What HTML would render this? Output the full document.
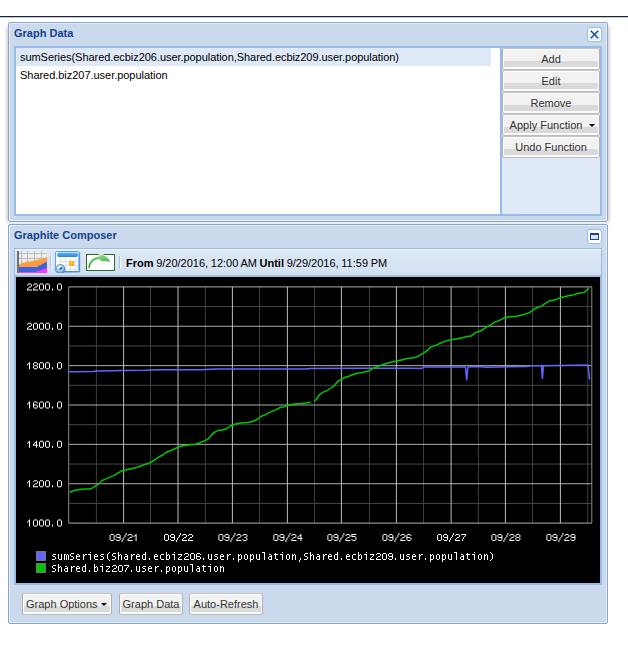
<!DOCTYPE html>
<html><head><meta charset="utf-8">
<style>
html,body{margin:0;padding:0;background:#fff;width:628px;height:662px;overflow:hidden;position:relative;font-family:"Liberation Sans",sans-serif;font-size:11px;}
.abs{position:absolute;}
.topline{left:0;top:16px;width:628px;height:1px;background:#232323;}
.topline2{left:0;top:17px;width:628px;height:1px;background:#b4cdee;}
.shadow{left:4px;top:26px;width:608px;height:200px;border-radius:4px;box-shadow:0 0 4px 1px rgba(0,0,0,0.18);background:rgba(0,0,0,0.06);}
.win{left:8px;width:598px;background:#cad9ec;border:1px solid #8ba6cb;border-radius:2px;box-shadow:inset 0 0 0 1px #e4ebf4;}
.title{left:5px;font-weight:bold;color:#15428b;font-size:11px;line-height:13px;white-space:nowrap;}
.tool{width:13px;height:13px;border:1px solid #9cbde9;border-radius:3px;background:#fff;}
.body{border:2px solid #99bbe8;}
.btn{position:absolute;box-sizing:border-box;border:1px solid #aeaeae;border-top-color:#c4c4c4;border-bottom-color:#bcbcbc;border-radius:3px;box-shadow:inset 1px 0 0 #fff,inset -1px 0 0 #fff;
 background:linear-gradient(to bottom,#fff 0,#fff 1px,#f2f2f2 1px,#f2f2f2 12px,#dadada 12px,#dadada 18px,#f7f7f7 18px,#fff 20px);
 color:#333;font-size:11px;line-height:13px;text-align:center;white-space:nowrap;}
.btn span{position:absolute;left:0;right:0;}
.arrow{position:absolute;width:0;height:0;border-left:3px solid transparent;border-right:3px solid transparent;border-top:3px solid #000;}
.row{position:absolute;left:0;height:18px;line-height:18px;color:#000;white-space:nowrap;padding-left:4px;font-size:11px;}
.sep{position:absolute;width:1px;background:#a8c4ec;box-shadow:1px 0 0 #fff;}
svg text{font-family:"Liberation Mono",monospace;font-size:10px;fill:#fff;}
</style></head><body>
<div class="abs topline"></div>
<div class="abs topline2"></div>
<div class="abs" style="left:4px;top:24px;width:4px;height:202px;background:linear-gradient(to right,rgba(0,0,0,0),rgba(0,0,0,0.16));-webkit-mask-image:linear-gradient(to bottom,transparent 0,#000 5px,#000 calc(100% - 7px),transparent 100%);"></div>
<div class="abs" style="left:608px;top:24px;width:4px;height:202px;background:linear-gradient(to left,rgba(0,0,0,0),rgba(0,0,0,0.16));-webkit-mask-image:linear-gradient(to bottom,transparent 0,#000 5px,#000 calc(100% - 7px),transparent 100%);"></div>
<div class="abs" style="left:8px;top:222px;width:600px;height:2px;background:rgba(0,0,0,0.07);"></div>

<!-- Graph Data window -->
<div class="abs win" style="top:22px;height:198px;">
  <div class="abs title" style="top:4px;">Graph Data</div>
  <div class="abs tool" style="left:578px;top:4px;background:linear-gradient(#f4faff,#d6ebfd);box-shadow:inset 0 0 0 1px #fff;">
    <svg width="13" height="13" style="position:absolute;left:0;top:0"><path d="M2.8,2.8 L10.2,10.2 M10.2,2.8 L2.8,10.2" stroke="#1d3f8f" stroke-width="1.35"/></svg>
  </div>
  <div class="abs body" style="left:5px;top:23px;width:584px;height:166px;background:#fff;">
    <div class="row" style="top:0;width:471px;background:#dfe8f6;letter-spacing:-0.052px;">sumSeries(Shared.ecbiz206.user.population,Shared.ecbiz209.user.population)</div>
    <div class="row" style="top:18px;letter-spacing:-0.035px;">Shared.biz207.user.population</div>
    <div class="abs" style="left:484px;top:0;width:2px;height:166px;background:#99bbe8;"></div>
    <div class="abs" style="left:486px;top:0;width:98px;height:166px;background:#dfe8f6;">
      <div class="btn" style="left:0;top:0;width:98px;height:22px;"><span style="top:4px;">Add</span></div>
      <div class="btn" style="left:0;top:22px;width:98px;height:22px;"><span style="top:4px;">Edit</span></div>
      <div class="btn" style="left:0;top:44px;width:98px;height:22px;"><span style="top:4px;">Remove</span></div>
      <div class="btn" style="left:0;top:66px;width:98px;height:22px;"><span style="top:4px;left:-10px;">Apply Function</span><div class="arrow" style="left:86px;top:9px;"></div></div>
      <div class="btn" style="left:0;top:88px;width:98px;height:22px;"><span style="top:4px;">Undo Function</span></div>
    </div>
  </div>
</div>

<!-- Graphite Composer window -->
<div class="abs win" style="top:224px;height:398px;">
  <div class="abs title" style="top:4px;">Graphite Composer</div>
  <div class="abs tool" style="left:578px;top:4px;">
    <div class="abs" style="left:2px;top:3px;width:7px;height:4px;border:1px solid #1f3fa6;border-top-width:2px;background:#d5e6fa;"></div>
  </div>
  <!-- toolbar -->
  <div class="abs" style="left:5px;top:23px;width:586px;height:26px;border:1px solid #99bbe8;border-bottom-color:#a9bfd6;background:linear-gradient(#f4f8fc 0,#f4f8fc 1px,#dde8f5 1px,#d3e0f1 100%);">
    <!-- icon 1 -->
    <svg class="abs" style="left:2px;top:2px" width="30" height="22" viewBox="0 0 30 22">
      <rect x="0" y="0" width="30" height="22" fill="#ececec"/>
      <path d="M2,2.5 H30 M2,7.5 H30 M4.5,0 V22 M10.5,0 V22 M17.5,0 V22 M24.5,0 V22" stroke="#bdbdbd" stroke-width="1"/>
      <path d="M2,22 L2,13.5 L3,13 L4,12.5 L5,12.5 L6,11.8 L8,11.5 L9,11 L11,10.3 L13,10.5 L16,10 L18,9.3 L20,9 L22,8.3 L24,8.2 L26,7.3 L28,7 L29,6 L30,6 L30,22 Z" fill="#ff9b3d"/>
      <path d="M2,22 L2,16 L20,16 L22,14.5 L24,14 L25,13 L27,12.5 L28,11.5 L30,11 L30,22 Z" fill="#3f62dd"/>
      <path d="M2,22 L2,21 L19,21 L20,20 L22,20 L24,19 L26,18.5 L28,17.5 L30,17 L30,22 Z" fill="#ff38ff"/>
      <rect x="0" y="0" width="2" height="22" fill="#707070"/>
    </svg>
    <div class="sep" style="left:35px;top:7px;height:13px;"></div>
    <!-- icon 2 calendar -->
    <svg class="abs" style="left:40px;top:2px" width="26" height="22" viewBox="0 0 26 22">
      <defs><linearGradient id="hb" x1="0" y1="0" x2="0" y2="1"><stop offset="0" stop-color="#6fb8f2"/><stop offset="1" stop-color="#1f85dc"/></linearGradient>
      <radialGradient id="cl" cx="0.4" cy="0.35" r="0.7"><stop offset="0" stop-color="#f0faff"/><stop offset="0.55" stop-color="#9ccaf2"/><stop offset="1" stop-color="#3f7fd0"/></radialGradient>
      <radialGradient id="og" cx="0.45" cy="0.4" r="0.6"><stop offset="0" stop-color="#ffe80a"/><stop offset="1" stop-color="#ff9400"/></radialGradient></defs>
      <rect x="1.5" y="1.5" width="24" height="20.5" fill="#c4ccd6"/>
      <rect x="0.5" y="0.5" width="24" height="20.5" rx="1.5" fill="#fdfdfd" stroke="#55a6ee"/>
      <rect x="2" y="1.5" width="21" height="4.5" rx="2" fill="url(#hb)"/>
      <path d="M1,10.5 H24 M1,14.5 H24 M1,18.5 H24 M5.5,7 V20.5 M10.5,7 V20.5 M15.5,7 V20.5 M20.5,7 V20.5" stroke="#e4e4e4"/>
      <rect x="14" y="10" width="5" height="4.5" fill="url(#og)"/>
      <path d="M24,2 V21 M2,20.5 H24" stroke="#3f91e0" stroke-width="1"/>
      <circle cx="5.5" cy="18" r="4.5" fill="url(#cl)" stroke="#4c86cf" stroke-width="0.8"/>
      <path d="M4.5,18.5 L7,16.5" stroke="#222" stroke-width="1.2"/>
    </svg>
    <!-- icon 3 arrow -->
    <svg class="abs" style="left:71px;top:5px" width="29" height="17" viewBox="0 0 29 17">
      <defs><linearGradient id="ag" x1="0" y1="0" x2="0" y2="1"><stop offset="0" stop-color="#8fdc8f"/><stop offset="0.6" stop-color="#4fb44f"/><stop offset="1" stop-color="#2f7f2f"/></linearGradient></defs>
      <rect x="0.5" y="0.5" width="28" height="16" fill="#fff" stroke="#2e6b2e"/>
      <rect x="13" y="0" width="4.5" height="1.2" fill="#fff"/>
      <path d="M3.1,14.6 L2.4,13.2 C2.5,8 6.5,2.8 14.2,2.2 L14.4,0.2 C19,1 22.5,3.5 24.4,7.8 L14.3,6.8 L14.3,4.9 C8.5,5 4.2,8.2 3.6,14.6 Z" fill="url(#ag)"/>
    </svg>
    <div class="sep" style="left:104px;top:7px;height:13px;"></div>
    <div class="abs" style="left:111px;top:8px;line-height:13px;white-space:nowrap;color:#000;word-spacing:-0.4px;"><b>From</b> 9/20/2016, 12:00 AM <b>Until</b> 9/29/2016, 11:59 PM</div>
  </div>
  <!-- chart body border -->
  <div class="abs" style="left:5px;top:51px;width:584px;height:306px;border:2px solid #99bbe8;border-top-width:1px;"></div>
  <!-- footer buttons -->
  <div class="btn" style="left:13px;top:368px;width:90px;height:22px;"><span style="top:4px;text-align:left;padding-left:3px;">Graph Options</span><div class="arrow" style="left:78px;top:9px;"></div></div>
  <div class="btn" style="left:110px;top:368px;width:64px;height:22px;"><span style="top:4px;">Graph Data</span></div>
  <div class="btn" style="left:180px;top:368px;width:74px;height:22px;"><span style="top:4px;">Auto-Refresh</span></div>
</div>

<svg class="abs" style="left:0;top:0" width="628" height="662">
<rect x="16" y="277" width="584" height="306" fill="#000"/>
<line x1="68.7" y1="306.58" x2="591.8" y2="306.58" stroke="#484848" stroke-width="1"/>
<line x1="68.7" y1="345.95" x2="591.8" y2="345.95" stroke="#484848" stroke-width="1"/>
<line x1="68.7" y1="385.31" x2="591.8" y2="385.31" stroke="#484848" stroke-width="1"/>
<line x1="68.7" y1="424.68" x2="591.8" y2="424.68" stroke="#484848" stroke-width="1"/>
<line x1="68.7" y1="464.05" x2="591.8" y2="464.05" stroke="#484848" stroke-width="1"/>
<line x1="68.7" y1="503.41" x2="591.8" y2="503.41" stroke="#484848" stroke-width="1"/>
<line x1="96.4" y1="286.9" x2="96.4" y2="523.1" stroke="#3e3e3e" stroke-width="1"/>
<line x1="150.5" y1="286.9" x2="150.5" y2="523.1" stroke="#3e3e3e" stroke-width="1"/>
<line x1="205.3" y1="286.9" x2="205.3" y2="523.1" stroke="#3e3e3e" stroke-width="1"/>
<line x1="259.5" y1="286.9" x2="259.5" y2="523.1" stroke="#3e3e3e" stroke-width="1"/>
<line x1="314.5" y1="286.9" x2="314.5" y2="523.1" stroke="#3e3e3e" stroke-width="1"/>
<line x1="369.4" y1="286.9" x2="369.4" y2="523.1" stroke="#3e3e3e" stroke-width="1"/>
<line x1="423.5" y1="286.9" x2="423.5" y2="523.1" stroke="#3e3e3e" stroke-width="1"/>
<line x1="478.4" y1="286.9" x2="478.4" y2="523.1" stroke="#3e3e3e" stroke-width="1"/>
<line x1="532.5" y1="286.9" x2="532.5" y2="523.1" stroke="#3e3e3e" stroke-width="1"/>
<line x1="587.7" y1="286.9" x2="587.7" y2="523.1" stroke="#3e3e3e" stroke-width="1"/>
<line x1="68.7" y1="286.90" x2="591.8" y2="286.90" stroke="#adadad" stroke-width="1"/>
<line x1="68.7" y1="326.27" x2="591.8" y2="326.27" stroke="#adadad" stroke-width="1"/>
<line x1="68.7" y1="365.63" x2="591.8" y2="365.63" stroke="#adadad" stroke-width="1"/>
<line x1="68.7" y1="405.00" x2="591.8" y2="405.00" stroke="#adadad" stroke-width="1"/>
<line x1="68.7" y1="444.36" x2="591.8" y2="444.36" stroke="#adadad" stroke-width="1"/>
<line x1="68.7" y1="483.73" x2="591.8" y2="483.73" stroke="#adadad" stroke-width="1"/>
<line x1="68.7" y1="523.10" x2="591.8" y2="523.10" stroke="#adadad" stroke-width="1"/>
<line x1="123.6" y1="286.9" x2="123.6" y2="523.1" stroke="#bbbbbb" stroke-width="1"/>
<line x1="178.0" y1="286.9" x2="178.0" y2="523.1" stroke="#bbbbbb" stroke-width="1"/>
<line x1="232.4" y1="286.9" x2="232.4" y2="523.1" stroke="#bbbbbb" stroke-width="1"/>
<line x1="287.4" y1="286.9" x2="287.4" y2="523.1" stroke="#bbbbbb" stroke-width="1"/>
<line x1="341.4" y1="286.9" x2="341.4" y2="523.1" stroke="#bbbbbb" stroke-width="1"/>
<line x1="396.4" y1="286.9" x2="396.4" y2="523.1" stroke="#bbbbbb" stroke-width="1"/>
<line x1="451.1" y1="286.9" x2="451.1" y2="523.1" stroke="#bbbbbb" stroke-width="1"/>
<line x1="505.4" y1="286.9" x2="505.4" y2="523.1" stroke="#bbbbbb" stroke-width="1"/>
<line x1="560.4" y1="286.9" x2="560.4" y2="523.1" stroke="#bbbbbb" stroke-width="1"/>
<line x1="68.7" y1="286.9" x2="68.7" y2="523.1" stroke="#8a8a8a" stroke-width="1"/>
<line x1="591.8" y1="286.9" x2="591.8" y2="523.1" stroke="#8a8a8a" stroke-width="1"/>
<path d="M68.7,371.7 L92.8,371.5 L96.6,371.1 L113.1,370.8 L122.0,370.6 L146.0,370.3 L161.3,369.7 L200.8,369.7 L216.0,368.9 L305.9,368.9 L309.5,368.5 L363.0,368.3 L412.2,368.2 L421.7,368.6 L423.5,367.0 L465.5,367.0 L466.7,380.0 L467.9,367.0 L478.2,366.5 L485.9,367.2 L526.6,366.5 L531.7,365.7 L541.4,365.7 L542.4,378.4 L543.4,365.7 L572.5,365.2 L588.0,365.0 L589.6,379.7" fill="none" stroke="#6464ff" stroke-width="1.5" stroke-linejoin="round"/>
<path d="M69.6,492.5 L73.2,490.8 L76.7,489.9 L81.5,489.3 L85.7,489.0 L89.3,489.0 L92.3,488.1 L95.9,485.6 L99.4,483.6 L101.8,480.6 L104.8,479.4 L109.0,477.4 L113.8,475.6 L117.4,473.4 L121.5,470.8 L125.7,469.9 L130.5,468.7 L134.7,468.1 L140.0,466.3 L144.8,464.5 L149.6,463.0 L154.3,460.2 L159.1,456.8 L162.7,455.0 L166.3,452.2 L171.1,450.5 L175.8,448.3 L181.2,446.0 L186.6,445.3 L191.4,444.6 L195.5,444.2 L199.7,443.0 L204.5,440.9 L208.1,438.9 L211.7,434.9 L214.0,432.6 L217.6,430.6 L222.4,430.0 L226.5,428.7 L230.7,425.8 L234.9,424.3 L239.1,423.2 L243.9,422.7 L248.6,422.5 L252.2,421.5 L256.4,419.8 L261.2,416.3 L265.4,414.7 L270.1,412.1 L275.5,409.9 L280.3,407.3 L283.9,406.9 L286.9,405.5 L292.8,404.3 L297.6,403.7 L302.3,403.4 L307.1,402.8 L310.7,402.2" fill="none" stroke="#00c800" stroke-width="1.5" stroke-linejoin="round"/>
<path d="M314.3,401.6 L316.7,399.0 L319.1,395.1 L322.6,392.4 L327.4,390.4 L331.0,388.0 L334.0,385.8 L337.0,382.2 L340.5,379.6 L344.7,377.5 L348.9,376.3 L353.1,374.5 L357.3,373.3 L362.0,372.6 L365.6,371.8 L369.2,370.7 L372.7,368.6 L377.5,366.8 L382.3,364.7 L387.1,363.2 L391.9,362.0 L396.6,361.1 L401.4,359.9 L406.2,358.7 L411.0,358.1 L416.3,357.2 L420.5,354.9 L424.1,352.7 L427.7,350.1 L430.7,347.1 L433.7,345.9 L437.0,344.9 L440.2,343.2 L444.4,341.4 L447.9,340.4 L452.7,339.4 L457.5,338.7 L462.3,337.7 L467.1,336.6 L471.2,336.1 L474.2,333.4 L477.2,331.9 L481.4,330.7 L486.2,327.1 L489.7,325.5 L494.5,322.3 L498.1,320.9 L501.1,319.6 L505.3,317.2 L510.0,316.8 L516.8,316.3 L520.8,315.2 L525.6,314.1 L530.3,312.1 L533.7,309.5 L537.1,307.5 L541.8,306.1 L545.2,303.3 L549.9,300.7 L553.3,300.3 L557.4,298.9 L560.8,297.6 L565.5,296.5 L569.6,295.6 L572.9,294.9 L577.7,293.5 L583.8,292.6 L587.2,289.7 L589.2,288.4" fill="none" stroke="#00c800" stroke-width="1.5" stroke-linejoin="round"/>
<rect x="36.5" y="551.5" width="9" height="9" fill="#6464ff" stroke="#777" stroke-width="1"/>
<rect x="36.5" y="563.5" width="9" height="9" fill="#00c800" stroke="#777" stroke-width="1"/>
<path d="M28,283.5h3v1h-3zM27,284.5h1v1h-1zM31,284.5h1v1h-1zM31,285.5h1v1h-1zM29,286.5h2v1h-2zM28,287.5h1v1h-1zM27,288.5h1v1h-1zM27,289.5h5v1h-5zM34,283.5h3v1h-3zM33,284.5h1v1h-1zM37,284.5h1v1h-1zM37,285.5h1v1h-1zM35,286.5h2v1h-2zM34,287.5h1v1h-1zM33,288.5h1v1h-1zM33,289.5h5v1h-5zM40,283.5h3v1h-3zM39,284.5h1v1h-1zM43,284.5h1v1h-1zM39,285.5h1v1h-1zM43,285.5h1v1h-1zM39,286.5h1v1h-1zM43,286.5h1v1h-1zM39,287.5h1v1h-1zM43,287.5h1v1h-1zM39,288.5h1v1h-1zM43,288.5h1v1h-1zM40,289.5h3v1h-3zM46,283.5h3v1h-3zM45,284.5h1v1h-1zM49,284.5h1v1h-1zM45,285.5h1v1h-1zM49,285.5h1v1h-1zM45,286.5h1v1h-1zM49,286.5h1v1h-1zM45,287.5h1v1h-1zM49,287.5h1v1h-1zM45,288.5h1v1h-1zM49,288.5h1v1h-1zM46,289.5h3v1h-3zM52,288.5h1v1h-1zM52,289.5h1v1h-1zM58,283.5h3v1h-3zM57,284.5h1v1h-1zM61,284.5h1v1h-1zM57,285.5h1v1h-1zM61,285.5h1v1h-1zM57,286.5h1v1h-1zM61,286.5h1v1h-1zM57,287.5h1v1h-1zM61,287.5h1v1h-1zM57,288.5h1v1h-1zM61,288.5h1v1h-1zM58,289.5h3v1h-3zM28,322.75h3v1h-3zM27,323.75h1v1h-1zM31,323.75h1v1h-1zM31,324.75h1v1h-1zM29,325.75h2v1h-2zM28,326.75h1v1h-1zM27,327.75h1v1h-1zM27,328.75h5v1h-5zM34,322.75h3v1h-3zM33,323.75h1v1h-1zM37,323.75h1v1h-1zM33,324.75h1v1h-1zM37,324.75h1v1h-1zM33,325.75h1v1h-1zM37,325.75h1v1h-1zM33,326.75h1v1h-1zM37,326.75h1v1h-1zM33,327.75h1v1h-1zM37,327.75h1v1h-1zM34,328.75h3v1h-3zM40,322.75h3v1h-3zM39,323.75h1v1h-1zM43,323.75h1v1h-1zM39,324.75h1v1h-1zM43,324.75h1v1h-1zM39,325.75h1v1h-1zM43,325.75h1v1h-1zM39,326.75h1v1h-1zM43,326.75h1v1h-1zM39,327.75h1v1h-1zM43,327.75h1v1h-1zM40,328.75h3v1h-3zM46,322.75h3v1h-3zM45,323.75h1v1h-1zM49,323.75h1v1h-1zM45,324.75h1v1h-1zM49,324.75h1v1h-1zM45,325.75h1v1h-1zM49,325.75h1v1h-1zM45,326.75h1v1h-1zM49,326.75h1v1h-1zM45,327.75h1v1h-1zM49,327.75h1v1h-1zM46,328.75h3v1h-3zM52,327.75h1v1h-1zM52,328.75h1v1h-1zM58,322.75h3v1h-3zM57,323.75h1v1h-1zM61,323.75h1v1h-1zM57,324.75h1v1h-1zM61,324.75h1v1h-1zM57,325.75h1v1h-1zM61,325.75h1v1h-1zM57,326.75h1v1h-1zM61,326.75h1v1h-1zM57,327.75h1v1h-1zM61,327.75h1v1h-1zM58,328.75h3v1h-3zM29,362.25h1v1h-1zM28,363.25h2v1h-2zM27,364.25h1v1h-1zM29,364.25h1v1h-1zM29,365.25h1v1h-1zM29,366.25h1v1h-1zM29,367.25h1v1h-1zM29,368.25h1v1h-1zM34,362.25h3v1h-3zM33,363.25h1v1h-1zM37,363.25h1v1h-1zM33,364.25h1v1h-1zM37,364.25h1v1h-1zM34,365.25h3v1h-3zM33,366.25h1v1h-1zM37,366.25h1v1h-1zM33,367.25h1v1h-1zM37,367.25h1v1h-1zM34,368.25h3v1h-3zM40,362.25h3v1h-3zM39,363.25h1v1h-1zM43,363.25h1v1h-1zM39,364.25h1v1h-1zM43,364.25h1v1h-1zM39,365.25h1v1h-1zM43,365.25h1v1h-1zM39,366.25h1v1h-1zM43,366.25h1v1h-1zM39,367.25h1v1h-1zM43,367.25h1v1h-1zM40,368.25h3v1h-3zM46,362.25h3v1h-3zM45,363.25h1v1h-1zM49,363.25h1v1h-1zM45,364.25h1v1h-1zM49,364.25h1v1h-1zM45,365.25h1v1h-1zM49,365.25h1v1h-1zM45,366.25h1v1h-1zM49,366.25h1v1h-1zM45,367.25h1v1h-1zM49,367.25h1v1h-1zM46,368.25h3v1h-3zM52,367.25h1v1h-1zM52,368.25h1v1h-1zM58,362.25h3v1h-3zM57,363.25h1v1h-1zM61,363.25h1v1h-1zM57,364.25h1v1h-1zM61,364.25h1v1h-1zM57,365.25h1v1h-1zM61,365.25h1v1h-1zM57,366.25h1v1h-1zM61,366.25h1v1h-1zM57,367.25h1v1h-1zM61,367.25h1v1h-1zM58,368.25h3v1h-3zM29,401.5h1v1h-1zM28,402.5h2v1h-2zM27,403.5h1v1h-1zM29,403.5h1v1h-1zM29,404.5h1v1h-1zM29,405.5h1v1h-1zM29,406.5h1v1h-1zM29,407.5h1v1h-1zM34,401.5h3v1h-3zM33,402.5h1v1h-1zM37,402.5h1v1h-1zM33,403.5h1v1h-1zM33,404.5h4v1h-4zM33,405.5h1v1h-1zM37,405.5h1v1h-1zM33,406.5h1v1h-1zM37,406.5h1v1h-1zM34,407.5h3v1h-3zM40,401.5h3v1h-3zM39,402.5h1v1h-1zM43,402.5h1v1h-1zM39,403.5h1v1h-1zM43,403.5h1v1h-1zM39,404.5h1v1h-1zM43,404.5h1v1h-1zM39,405.5h1v1h-1zM43,405.5h1v1h-1zM39,406.5h1v1h-1zM43,406.5h1v1h-1zM40,407.5h3v1h-3zM46,401.5h3v1h-3zM45,402.5h1v1h-1zM49,402.5h1v1h-1zM45,403.5h1v1h-1zM49,403.5h1v1h-1zM45,404.5h1v1h-1zM49,404.5h1v1h-1zM45,405.5h1v1h-1zM49,405.5h1v1h-1zM45,406.5h1v1h-1zM49,406.5h1v1h-1zM46,407.5h3v1h-3zM52,406.5h1v1h-1zM52,407.5h1v1h-1zM58,401.5h3v1h-3zM57,402.5h1v1h-1zM61,402.5h1v1h-1zM57,403.5h1v1h-1zM61,403.5h1v1h-1zM57,404.5h1v1h-1zM61,404.5h1v1h-1zM57,405.5h1v1h-1zM61,405.5h1v1h-1zM57,406.5h1v1h-1zM61,406.5h1v1h-1zM58,407.5h3v1h-3zM29,440.75h1v1h-1zM28,441.75h2v1h-2zM27,442.75h1v1h-1zM29,442.75h1v1h-1zM29,443.75h1v1h-1zM29,444.75h1v1h-1zM29,445.75h1v1h-1zM29,446.75h1v1h-1zM36,440.75h1v1h-1zM35,441.75h2v1h-2zM34,442.75h1v1h-1zM36,442.75h1v1h-1zM33,443.75h1v1h-1zM36,443.75h1v1h-1zM33,444.75h5v1h-5zM36,445.75h1v1h-1zM36,446.75h1v1h-1zM40,440.75h3v1h-3zM39,441.75h1v1h-1zM43,441.75h1v1h-1zM39,442.75h1v1h-1zM43,442.75h1v1h-1zM39,443.75h1v1h-1zM43,443.75h1v1h-1zM39,444.75h1v1h-1zM43,444.75h1v1h-1zM39,445.75h1v1h-1zM43,445.75h1v1h-1zM40,446.75h3v1h-3zM46,440.75h3v1h-3zM45,441.75h1v1h-1zM49,441.75h1v1h-1zM45,442.75h1v1h-1zM49,442.75h1v1h-1zM45,443.75h1v1h-1zM49,443.75h1v1h-1zM45,444.75h1v1h-1zM49,444.75h1v1h-1zM45,445.75h1v1h-1zM49,445.75h1v1h-1zM46,446.75h3v1h-3zM52,445.75h1v1h-1zM52,446.75h1v1h-1zM58,440.75h3v1h-3zM57,441.75h1v1h-1zM61,441.75h1v1h-1zM57,442.75h1v1h-1zM61,442.75h1v1h-1zM57,443.75h1v1h-1zM61,443.75h1v1h-1zM57,444.75h1v1h-1zM61,444.75h1v1h-1zM57,445.75h1v1h-1zM61,445.75h1v1h-1zM58,446.75h3v1h-3zM29,480.25h1v1h-1zM28,481.25h2v1h-2zM27,482.25h1v1h-1zM29,482.25h1v1h-1zM29,483.25h1v1h-1zM29,484.25h1v1h-1zM29,485.25h1v1h-1zM29,486.25h1v1h-1zM34,480.25h3v1h-3zM33,481.25h1v1h-1zM37,481.25h1v1h-1zM37,482.25h1v1h-1zM35,483.25h2v1h-2zM34,484.25h1v1h-1zM33,485.25h1v1h-1zM33,486.25h5v1h-5zM40,480.25h3v1h-3zM39,481.25h1v1h-1zM43,481.25h1v1h-1zM39,482.25h1v1h-1zM43,482.25h1v1h-1zM39,483.25h1v1h-1zM43,483.25h1v1h-1zM39,484.25h1v1h-1zM43,484.25h1v1h-1zM39,485.25h1v1h-1zM43,485.25h1v1h-1zM40,486.25h3v1h-3zM46,480.25h3v1h-3zM45,481.25h1v1h-1zM49,481.25h1v1h-1zM45,482.25h1v1h-1zM49,482.25h1v1h-1zM45,483.25h1v1h-1zM49,483.25h1v1h-1zM45,484.25h1v1h-1zM49,484.25h1v1h-1zM45,485.25h1v1h-1zM49,485.25h1v1h-1zM46,486.25h3v1h-3zM52,485.25h1v1h-1zM52,486.25h1v1h-1zM58,480.25h3v1h-3zM57,481.25h1v1h-1zM61,481.25h1v1h-1zM57,482.25h1v1h-1zM61,482.25h1v1h-1zM57,483.25h1v1h-1zM61,483.25h1v1h-1zM57,484.25h1v1h-1zM61,484.25h1v1h-1zM57,485.25h1v1h-1zM61,485.25h1v1h-1zM58,486.25h3v1h-3zM29,519.5h1v1h-1zM28,520.5h2v1h-2zM27,521.5h1v1h-1zM29,521.5h1v1h-1zM29,522.5h1v1h-1zM29,523.5h1v1h-1zM29,524.5h1v1h-1zM29,525.5h1v1h-1zM34,519.5h3v1h-3zM33,520.5h1v1h-1zM37,520.5h1v1h-1zM33,521.5h1v1h-1zM37,521.5h1v1h-1zM33,522.5h1v1h-1zM37,522.5h1v1h-1zM33,523.5h1v1h-1zM37,523.5h1v1h-1zM33,524.5h1v1h-1zM37,524.5h1v1h-1zM34,525.5h3v1h-3zM40,519.5h3v1h-3zM39,520.5h1v1h-1zM43,520.5h1v1h-1zM39,521.5h1v1h-1zM43,521.5h1v1h-1zM39,522.5h1v1h-1zM43,522.5h1v1h-1zM39,523.5h1v1h-1zM43,523.5h1v1h-1zM39,524.5h1v1h-1zM43,524.5h1v1h-1zM40,525.5h3v1h-3zM46,519.5h3v1h-3zM45,520.5h1v1h-1zM49,520.5h1v1h-1zM45,521.5h1v1h-1zM49,521.5h1v1h-1zM45,522.5h1v1h-1zM49,522.5h1v1h-1zM45,523.5h1v1h-1zM49,523.5h1v1h-1zM45,524.5h1v1h-1zM49,524.5h1v1h-1zM46,525.5h3v1h-3zM52,524.5h1v1h-1zM52,525.5h1v1h-1zM58,519.5h3v1h-3zM57,520.5h1v1h-1zM61,520.5h1v1h-1zM57,521.5h1v1h-1zM61,521.5h1v1h-1zM57,522.5h1v1h-1zM61,522.5h1v1h-1zM57,523.5h1v1h-1zM61,523.5h1v1h-1zM57,524.5h1v1h-1zM61,524.5h1v1h-1zM58,525.5h3v1h-3zM110.6,534h3v1h-3zM109.6,535h1v1h-1zM113.6,535h1v1h-1zM109.6,536h1v1h-1zM113.6,536h1v1h-1zM109.6,537h1v1h-1zM113.6,537h1v1h-1zM109.6,538h1v1h-1zM113.6,538h1v1h-1zM109.6,539h1v1h-1zM113.6,539h1v1h-1zM110.6,540h3v1h-3zM116.6,534h3v1h-3zM115.6,535h1v1h-1zM119.6,535h1v1h-1zM115.6,536h1v1h-1zM119.6,536h1v1h-1zM116.6,537h4v1h-4zM119.6,538h1v1h-1zM115.6,539h1v1h-1zM119.6,539h1v1h-1zM116.6,540h3v1h-3zM125.6,533h1v1h-1zM125.6,534h1v1h-1zM124.6,535h1v1h-1zM124.6,536h1v1h-1zM123.6,537h1v1h-1zM122.6,538h1v1h-1zM122.6,539h1v1h-1zM121.6,540h1v1h-1zM121.6,541h1v1h-1zM128.6,534h3v1h-3zM127.6,535h1v1h-1zM131.6,535h1v1h-1zM131.6,536h1v1h-1zM129.6,537h2v1h-2zM128.6,538h1v1h-1zM127.6,539h1v1h-1zM127.6,540h5v1h-5zM135.6,534h1v1h-1zM134.6,535h2v1h-2zM133.6,536h1v1h-1zM135.6,536h1v1h-1zM135.6,537h1v1h-1zM135.6,538h1v1h-1zM135.6,539h1v1h-1zM135.6,540h1v1h-1zM165,534h3v1h-3zM164,535h1v1h-1zM168,535h1v1h-1zM164,536h1v1h-1zM168,536h1v1h-1zM164,537h1v1h-1zM168,537h1v1h-1zM164,538h1v1h-1zM168,538h1v1h-1zM164,539h1v1h-1zM168,539h1v1h-1zM165,540h3v1h-3zM171,534h3v1h-3zM170,535h1v1h-1zM174,535h1v1h-1zM170,536h1v1h-1zM174,536h1v1h-1zM171,537h4v1h-4zM174,538h1v1h-1zM170,539h1v1h-1zM174,539h1v1h-1zM171,540h3v1h-3zM180,533h1v1h-1zM180,534h1v1h-1zM179,535h1v1h-1zM179,536h1v1h-1zM178,537h1v1h-1zM177,538h1v1h-1zM177,539h1v1h-1zM176,540h1v1h-1zM176,541h1v1h-1zM183,534h3v1h-3zM182,535h1v1h-1zM186,535h1v1h-1zM186,536h1v1h-1zM184,537h2v1h-2zM183,538h1v1h-1zM182,539h1v1h-1zM182,540h5v1h-5zM189,534h3v1h-3zM188,535h1v1h-1zM192,535h1v1h-1zM192,536h1v1h-1zM190,537h2v1h-2zM189,538h1v1h-1zM188,539h1v1h-1zM188,540h5v1h-5zM219.4,534h3v1h-3zM218.4,535h1v1h-1zM222.4,535h1v1h-1zM218.4,536h1v1h-1zM222.4,536h1v1h-1zM218.4,537h1v1h-1zM222.4,537h1v1h-1zM218.4,538h1v1h-1zM222.4,538h1v1h-1zM218.4,539h1v1h-1zM222.4,539h1v1h-1zM219.4,540h3v1h-3zM225.4,534h3v1h-3zM224.4,535h1v1h-1zM228.4,535h1v1h-1zM224.4,536h1v1h-1zM228.4,536h1v1h-1zM225.4,537h4v1h-4zM228.4,538h1v1h-1zM224.4,539h1v1h-1zM228.4,539h1v1h-1zM225.4,540h3v1h-3zM234.4,533h1v1h-1zM234.4,534h1v1h-1zM233.4,535h1v1h-1zM233.4,536h1v1h-1zM232.4,537h1v1h-1zM231.4,538h1v1h-1zM231.4,539h1v1h-1zM230.4,540h1v1h-1zM230.4,541h1v1h-1zM237.4,534h3v1h-3zM236.4,535h1v1h-1zM240.4,535h1v1h-1zM240.4,536h1v1h-1zM238.4,537h2v1h-2zM237.4,538h1v1h-1zM236.4,539h1v1h-1zM236.4,540h5v1h-5zM243.4,534h3v1h-3zM242.4,535h1v1h-1zM246.4,535h1v1h-1zM246.4,536h1v1h-1zM244.4,537h2v1h-2zM246.4,538h1v1h-1zM242.4,539h1v1h-1zM246.4,539h1v1h-1zM243.4,540h3v1h-3zM274.4,534h3v1h-3zM273.4,535h1v1h-1zM277.4,535h1v1h-1zM273.4,536h1v1h-1zM277.4,536h1v1h-1zM273.4,537h1v1h-1zM277.4,537h1v1h-1zM273.4,538h1v1h-1zM277.4,538h1v1h-1zM273.4,539h1v1h-1zM277.4,539h1v1h-1zM274.4,540h3v1h-3zM280.4,534h3v1h-3zM279.4,535h1v1h-1zM283.4,535h1v1h-1zM279.4,536h1v1h-1zM283.4,536h1v1h-1zM280.4,537h4v1h-4zM283.4,538h1v1h-1zM279.4,539h1v1h-1zM283.4,539h1v1h-1zM280.4,540h3v1h-3zM289.4,533h1v1h-1zM289.4,534h1v1h-1zM288.4,535h1v1h-1zM288.4,536h1v1h-1zM287.4,537h1v1h-1zM286.4,538h1v1h-1zM286.4,539h1v1h-1zM285.4,540h1v1h-1zM285.4,541h1v1h-1zM292.4,534h3v1h-3zM291.4,535h1v1h-1zM295.4,535h1v1h-1zM295.4,536h1v1h-1zM293.4,537h2v1h-2zM292.4,538h1v1h-1zM291.4,539h1v1h-1zM291.4,540h5v1h-5zM300.4,534h1v1h-1zM299.4,535h2v1h-2zM298.4,536h1v1h-1zM300.4,536h1v1h-1zM297.4,537h1v1h-1zM300.4,537h1v1h-1zM297.4,538h5v1h-5zM300.4,539h1v1h-1zM300.4,540h1v1h-1zM328.4,534h3v1h-3zM327.4,535h1v1h-1zM331.4,535h1v1h-1zM327.4,536h1v1h-1zM331.4,536h1v1h-1zM327.4,537h1v1h-1zM331.4,537h1v1h-1zM327.4,538h1v1h-1zM331.4,538h1v1h-1zM327.4,539h1v1h-1zM331.4,539h1v1h-1zM328.4,540h3v1h-3zM334.4,534h3v1h-3zM333.4,535h1v1h-1zM337.4,535h1v1h-1zM333.4,536h1v1h-1zM337.4,536h1v1h-1zM334.4,537h4v1h-4zM337.4,538h1v1h-1zM333.4,539h1v1h-1zM337.4,539h1v1h-1zM334.4,540h3v1h-3zM343.4,533h1v1h-1zM343.4,534h1v1h-1zM342.4,535h1v1h-1zM342.4,536h1v1h-1zM341.4,537h1v1h-1zM340.4,538h1v1h-1zM340.4,539h1v1h-1zM339.4,540h1v1h-1zM339.4,541h1v1h-1zM346.4,534h3v1h-3zM345.4,535h1v1h-1zM349.4,535h1v1h-1zM349.4,536h1v1h-1zM347.4,537h2v1h-2zM346.4,538h1v1h-1zM345.4,539h1v1h-1zM345.4,540h5v1h-5zM351.4,534h5v1h-5zM351.4,535h1v1h-1zM351.4,536h4v1h-4zM355.4,537h1v1h-1zM355.4,538h1v1h-1zM351.4,539h1v1h-1zM355.4,539h1v1h-1zM352.4,540h3v1h-3zM383.4,534h3v1h-3zM382.4,535h1v1h-1zM386.4,535h1v1h-1zM382.4,536h1v1h-1zM386.4,536h1v1h-1zM382.4,537h1v1h-1zM386.4,537h1v1h-1zM382.4,538h1v1h-1zM386.4,538h1v1h-1zM382.4,539h1v1h-1zM386.4,539h1v1h-1zM383.4,540h3v1h-3zM389.4,534h3v1h-3zM388.4,535h1v1h-1zM392.4,535h1v1h-1zM388.4,536h1v1h-1zM392.4,536h1v1h-1zM389.4,537h4v1h-4zM392.4,538h1v1h-1zM388.4,539h1v1h-1zM392.4,539h1v1h-1zM389.4,540h3v1h-3zM398.4,533h1v1h-1zM398.4,534h1v1h-1zM397.4,535h1v1h-1zM397.4,536h1v1h-1zM396.4,537h1v1h-1zM395.4,538h1v1h-1zM395.4,539h1v1h-1zM394.4,540h1v1h-1zM394.4,541h1v1h-1zM401.4,534h3v1h-3zM400.4,535h1v1h-1zM404.4,535h1v1h-1zM404.4,536h1v1h-1zM402.4,537h2v1h-2zM401.4,538h1v1h-1zM400.4,539h1v1h-1zM400.4,540h5v1h-5zM407.4,534h3v1h-3zM406.4,535h1v1h-1zM410.4,535h1v1h-1zM406.4,536h1v1h-1zM406.4,537h4v1h-4zM406.4,538h1v1h-1zM410.4,538h1v1h-1zM406.4,539h1v1h-1zM410.4,539h1v1h-1zM407.4,540h3v1h-3zM438.1,534h3v1h-3zM437.1,535h1v1h-1zM441.1,535h1v1h-1zM437.1,536h1v1h-1zM441.1,536h1v1h-1zM437.1,537h1v1h-1zM441.1,537h1v1h-1zM437.1,538h1v1h-1zM441.1,538h1v1h-1zM437.1,539h1v1h-1zM441.1,539h1v1h-1zM438.1,540h3v1h-3zM444.1,534h3v1h-3zM443.1,535h1v1h-1zM447.1,535h1v1h-1zM443.1,536h1v1h-1zM447.1,536h1v1h-1zM444.1,537h4v1h-4zM447.1,538h1v1h-1zM443.1,539h1v1h-1zM447.1,539h1v1h-1zM444.1,540h3v1h-3zM453.1,533h1v1h-1zM453.1,534h1v1h-1zM452.1,535h1v1h-1zM452.1,536h1v1h-1zM451.1,537h1v1h-1zM450.1,538h1v1h-1zM450.1,539h1v1h-1zM449.1,540h1v1h-1zM449.1,541h1v1h-1zM456.1,534h3v1h-3zM455.1,535h1v1h-1zM459.1,535h1v1h-1zM459.1,536h1v1h-1zM457.1,537h2v1h-2zM456.1,538h1v1h-1zM455.1,539h1v1h-1zM455.1,540h5v1h-5zM461.1,534h5v1h-5zM465.1,535h1v1h-1zM464.1,536h1v1h-1zM463.1,537h1v1h-1zM463.1,538h1v1h-1zM462.1,539h1v1h-1zM462.1,540h1v1h-1zM492.4,534h3v1h-3zM491.4,535h1v1h-1zM495.4,535h1v1h-1zM491.4,536h1v1h-1zM495.4,536h1v1h-1zM491.4,537h1v1h-1zM495.4,537h1v1h-1zM491.4,538h1v1h-1zM495.4,538h1v1h-1zM491.4,539h1v1h-1zM495.4,539h1v1h-1zM492.4,540h3v1h-3zM498.4,534h3v1h-3zM497.4,535h1v1h-1zM501.4,535h1v1h-1zM497.4,536h1v1h-1zM501.4,536h1v1h-1zM498.4,537h4v1h-4zM501.4,538h1v1h-1zM497.4,539h1v1h-1zM501.4,539h1v1h-1zM498.4,540h3v1h-3zM507.4,533h1v1h-1zM507.4,534h1v1h-1zM506.4,535h1v1h-1zM506.4,536h1v1h-1zM505.4,537h1v1h-1zM504.4,538h1v1h-1zM504.4,539h1v1h-1zM503.4,540h1v1h-1zM503.4,541h1v1h-1zM510.4,534h3v1h-3zM509.4,535h1v1h-1zM513.4,535h1v1h-1zM513.4,536h1v1h-1zM511.4,537h2v1h-2zM510.4,538h1v1h-1zM509.4,539h1v1h-1zM509.4,540h5v1h-5zM516.4,534h3v1h-3zM515.4,535h1v1h-1zM519.4,535h1v1h-1zM515.4,536h1v1h-1zM519.4,536h1v1h-1zM516.4,537h3v1h-3zM515.4,538h1v1h-1zM519.4,538h1v1h-1zM515.4,539h1v1h-1zM519.4,539h1v1h-1zM516.4,540h3v1h-3zM547.4,534h3v1h-3zM546.4,535h1v1h-1zM550.4,535h1v1h-1zM546.4,536h1v1h-1zM550.4,536h1v1h-1zM546.4,537h1v1h-1zM550.4,537h1v1h-1zM546.4,538h1v1h-1zM550.4,538h1v1h-1zM546.4,539h1v1h-1zM550.4,539h1v1h-1zM547.4,540h3v1h-3zM553.4,534h3v1h-3zM552.4,535h1v1h-1zM556.4,535h1v1h-1zM552.4,536h1v1h-1zM556.4,536h1v1h-1zM553.4,537h4v1h-4zM556.4,538h1v1h-1zM552.4,539h1v1h-1zM556.4,539h1v1h-1zM553.4,540h3v1h-3zM562.4,533h1v1h-1zM562.4,534h1v1h-1zM561.4,535h1v1h-1zM561.4,536h1v1h-1zM560.4,537h1v1h-1zM559.4,538h1v1h-1zM559.4,539h1v1h-1zM558.4,540h1v1h-1zM558.4,541h1v1h-1zM565.4,534h3v1h-3zM564.4,535h1v1h-1zM568.4,535h1v1h-1zM568.4,536h1v1h-1zM566.4,537h2v1h-2zM565.4,538h1v1h-1zM564.4,539h1v1h-1zM564.4,540h5v1h-5zM571.4,534h3v1h-3zM570.4,535h1v1h-1zM574.4,535h1v1h-1zM570.4,536h1v1h-1zM574.4,536h1v1h-1zM571.4,537h4v1h-4zM574.4,538h1v1h-1zM570.4,539h1v1h-1zM574.4,539h1v1h-1zM571.4,540h3v1h-3zM53,554h3v1h-3zM52,555h1v1h-1zM53,556h2v1h-2zM55,557h1v1h-1zM55,558h1v1h-1zM52,559h3v1h-3zM58,554h1v1h-1zM61,554h1v1h-1zM58,555h1v1h-1zM61,555h1v1h-1zM58,556h1v1h-1zM61,556h1v1h-1zM58,557h1v1h-1zM61,557h1v1h-1zM58,558h1v1h-1zM61,558h1v1h-1zM59,559h3v1h-3zM64,554h2v1h-2zM67,554h1v1h-1zM64,555h1v1h-1zM66,555h1v1h-1zM68,555h1v1h-1zM64,556h1v1h-1zM66,556h1v1h-1zM68,556h1v1h-1zM64,557h1v1h-1zM66,557h1v1h-1zM68,557h1v1h-1zM64,558h1v1h-1zM66,558h1v1h-1zM68,558h1v1h-1zM64,559h1v1h-1zM66,559h1v1h-1zM68,559h1v1h-1zM71,553h3v1h-3zM70,554h1v1h-1zM70,555h1v1h-1zM71,556h2v1h-2zM73,557h1v1h-1zM73,558h1v1h-1zM70,559h3v1h-3zM77,554h2v1h-2zM76,555h1v1h-1zM79,555h1v1h-1zM76,556h4v1h-4zM76,557h1v1h-1zM76,558h1v1h-1zM77,559h3v1h-3zM83,554h1v1h-1zM85,554h2v1h-2zM83,555h2v1h-2zM83,556h1v1h-1zM83,557h1v1h-1zM83,558h1v1h-1zM83,559h1v1h-1zM90,552h1v1h-1zM88,554h3v1h-3zM90,555h1v1h-1zM90,556h1v1h-1zM90,557h1v1h-1zM90,558h1v1h-1zM90,559h1v1h-1zM95,554h2v1h-2zM94,555h1v1h-1zM97,555h1v1h-1zM94,556h4v1h-4zM94,557h1v1h-1zM94,558h1v1h-1zM95,559h3v1h-3zM101,554h3v1h-3zM100,555h1v1h-1zM101,556h2v1h-2zM103,557h1v1h-1zM103,558h1v1h-1zM100,559h3v1h-3zM109,552h1v1h-1zM108,553h1v1h-1zM107,554h1v1h-1zM107,555h1v1h-1zM107,556h1v1h-1zM107,557h1v1h-1zM107,558h1v1h-1zM108,559h1v1h-1zM109,560h1v1h-1zM113,553h3v1h-3zM112,554h1v1h-1zM112,555h1v1h-1zM113,556h2v1h-2zM115,557h1v1h-1zM115,558h1v1h-1zM112,559h3v1h-3zM118,552h1v1h-1zM118,553h1v1h-1zM118,554h1v1h-1zM120,554h1v1h-1zM118,555h2v1h-2zM121,555h1v1h-1zM118,556h1v1h-1zM121,556h1v1h-1zM118,557h1v1h-1zM121,557h1v1h-1zM118,558h1v1h-1zM121,558h1v1h-1zM118,559h1v1h-1zM121,559h1v1h-1zM125,554h2v1h-2zM127,555h1v1h-1zM125,556h3v1h-3zM124,557h1v1h-1zM127,557h1v1h-1zM124,558h1v1h-1zM127,558h1v1h-1zM125,559h3v1h-3zM131,554h1v1h-1zM133,554h2v1h-2zM131,555h2v1h-2zM131,556h1v1h-1zM131,557h1v1h-1zM131,558h1v1h-1zM131,559h1v1h-1zM137,554h2v1h-2zM136,555h1v1h-1zM139,555h1v1h-1zM136,556h4v1h-4zM136,557h1v1h-1zM136,558h1v1h-1zM137,559h3v1h-3zM145,552h1v1h-1zM145,553h1v1h-1zM143,554h3v1h-3zM142,555h1v1h-1zM145,555h1v1h-1zM142,556h1v1h-1zM145,556h1v1h-1zM142,557h1v1h-1zM145,557h1v1h-1zM142,558h1v1h-1zM145,558h1v1h-1zM143,559h3v1h-3zM149,558h1v1h-1zM149,559h1v1h-1zM155,554h2v1h-2zM154,555h1v1h-1zM157,555h1v1h-1zM154,556h4v1h-4zM154,557h1v1h-1zM154,558h1v1h-1zM155,559h3v1h-3zM161,554h3v1h-3zM160,555h1v1h-1zM160,556h1v1h-1zM160,557h1v1h-1zM160,558h1v1h-1zM161,559h3v1h-3zM166,552h1v1h-1zM166,553h1v1h-1zM166,554h1v1h-1zM168,554h1v1h-1zM166,555h2v1h-2zM169,555h1v1h-1zM166,556h1v1h-1zM169,556h1v1h-1zM166,557h1v1h-1zM169,557h1v1h-1zM166,558h1v1h-1zM169,558h1v1h-1zM166,559h3v1h-3zM174,552h1v1h-1zM172,554h3v1h-3zM174,555h1v1h-1zM174,556h1v1h-1zM174,557h1v1h-1zM174,558h1v1h-1zM174,559h1v1h-1zM178,554h4v1h-4zM181,555h1v1h-1zM180,556h1v1h-1zM179,557h1v1h-1zM178,558h1v1h-1zM178,559h4v1h-4zM185,553h3v1h-3zM184,554h1v1h-1zM188,554h1v1h-1zM188,555h1v1h-1zM186,556h2v1h-2zM185,557h1v1h-1zM184,558h1v1h-1zM184,559h5v1h-5zM191,553h3v1h-3zM190,554h1v1h-1zM194,554h1v1h-1zM190,555h1v1h-1zM194,555h1v1h-1zM190,556h1v1h-1zM194,556h1v1h-1zM190,557h1v1h-1zM194,557h1v1h-1zM190,558h1v1h-1zM194,558h1v1h-1zM191,559h3v1h-3zM197,553h3v1h-3zM196,554h1v1h-1zM200,554h1v1h-1zM196,555h1v1h-1zM196,556h4v1h-4zM196,557h1v1h-1zM200,557h1v1h-1zM196,558h1v1h-1zM200,558h1v1h-1zM197,559h3v1h-3zM203,558h1v1h-1zM203,559h1v1h-1zM208,554h1v1h-1zM211,554h1v1h-1zM208,555h1v1h-1zM211,555h1v1h-1zM208,556h1v1h-1zM211,556h1v1h-1zM208,557h1v1h-1zM211,557h1v1h-1zM208,558h1v1h-1zM211,558h1v1h-1zM209,559h3v1h-3zM215,554h3v1h-3zM214,555h1v1h-1zM215,556h2v1h-2zM217,557h1v1h-1zM217,558h1v1h-1zM214,559h3v1h-3zM221,554h2v1h-2zM220,555h1v1h-1zM223,555h1v1h-1zM220,556h4v1h-4zM220,557h1v1h-1zM220,558h1v1h-1zM221,559h3v1h-3zM227,554h1v1h-1zM229,554h2v1h-2zM227,555h2v1h-2zM227,556h1v1h-1zM227,557h1v1h-1zM227,558h1v1h-1zM227,559h1v1h-1zM233,558h1v1h-1zM233,559h1v1h-1zM238,554h1v1h-1zM240,554h1v1h-1zM238,555h2v1h-2zM241,555h1v1h-1zM238,556h1v1h-1zM241,556h1v1h-1zM238,557h1v1h-1zM241,557h1v1h-1zM238,558h1v1h-1zM241,558h1v1h-1zM238,559h3v1h-3zM238,560h1v1h-1zM238,561h1v1h-1zM245,554h2v1h-2zM244,555h1v1h-1zM247,555h1v1h-1zM244,556h1v1h-1zM247,556h1v1h-1zM244,557h1v1h-1zM247,557h1v1h-1zM244,558h1v1h-1zM247,558h1v1h-1zM245,559h2v1h-2zM250,554h1v1h-1zM252,554h1v1h-1zM250,555h2v1h-2zM253,555h1v1h-1zM250,556h1v1h-1zM253,556h1v1h-1zM250,557h1v1h-1zM253,557h1v1h-1zM250,558h1v1h-1zM253,558h1v1h-1zM250,559h3v1h-3zM250,560h1v1h-1zM250,561h1v1h-1zM256,554h1v1h-1zM259,554h1v1h-1zM256,555h1v1h-1zM259,555h1v1h-1zM256,556h1v1h-1zM259,556h1v1h-1zM256,557h1v1h-1zM259,557h1v1h-1zM256,558h1v1h-1zM259,558h1v1h-1zM257,559h3v1h-3zM262,552h3v1h-3zM264,553h1v1h-1zM264,554h1v1h-1zM264,555h1v1h-1zM264,556h1v1h-1zM264,557h1v1h-1zM264,558h1v1h-1zM264,559h1v1h-1zM269,554h2v1h-2zM271,555h1v1h-1zM269,556h3v1h-3zM268,557h1v1h-1zM271,557h1v1h-1zM268,558h1v1h-1zM271,558h1v1h-1zM269,559h3v1h-3zM275,553h1v1h-1zM274,554h4v1h-4zM275,555h1v1h-1zM275,556h1v1h-1zM275,557h1v1h-1zM275,558h1v1h-1zM276,559h2v1h-2zM282,552h1v1h-1zM280,554h3v1h-3zM282,555h1v1h-1zM282,556h1v1h-1zM282,557h1v1h-1zM282,558h1v1h-1zM282,559h1v1h-1zM287,554h2v1h-2zM286,555h1v1h-1zM289,555h1v1h-1zM286,556h1v1h-1zM289,556h1v1h-1zM286,557h1v1h-1zM289,557h1v1h-1zM286,558h1v1h-1zM289,558h1v1h-1zM287,559h2v1h-2zM292,554h1v1h-1zM294,554h1v1h-1zM292,555h2v1h-2zM295,555h1v1h-1zM292,556h1v1h-1zM295,556h1v1h-1zM292,557h1v1h-1zM295,557h1v1h-1zM292,558h1v1h-1zM295,558h1v1h-1zM292,559h1v1h-1zM295,559h1v1h-1zM300,558h1v1h-1zM300,559h1v1h-1zM299,560h1v1h-1zM299,561h1v1h-1zM305,553h3v1h-3zM304,554h1v1h-1zM304,555h1v1h-1zM305,556h2v1h-2zM307,557h1v1h-1zM307,558h1v1h-1zM304,559h3v1h-3zM310,552h1v1h-1zM310,553h1v1h-1zM310,554h1v1h-1zM312,554h1v1h-1zM310,555h2v1h-2zM313,555h1v1h-1zM310,556h1v1h-1zM313,556h1v1h-1zM310,557h1v1h-1zM313,557h1v1h-1zM310,558h1v1h-1zM313,558h1v1h-1zM310,559h1v1h-1zM313,559h1v1h-1zM317,554h2v1h-2zM319,555h1v1h-1zM317,556h3v1h-3zM316,557h1v1h-1zM319,557h1v1h-1zM316,558h1v1h-1zM319,558h1v1h-1zM317,559h3v1h-3zM323,554h1v1h-1zM325,554h2v1h-2zM323,555h2v1h-2zM323,556h1v1h-1zM323,557h1v1h-1zM323,558h1v1h-1zM323,559h1v1h-1zM329,554h2v1h-2zM328,555h1v1h-1zM331,555h1v1h-1zM328,556h4v1h-4zM328,557h1v1h-1zM328,558h1v1h-1zM329,559h3v1h-3zM337,552h1v1h-1zM337,553h1v1h-1zM335,554h3v1h-3zM334,555h1v1h-1zM337,555h1v1h-1zM334,556h1v1h-1zM337,556h1v1h-1zM334,557h1v1h-1zM337,557h1v1h-1zM334,558h1v1h-1zM337,558h1v1h-1zM335,559h3v1h-3zM341,558h1v1h-1zM341,559h1v1h-1zM347,554h2v1h-2zM346,555h1v1h-1zM349,555h1v1h-1zM346,556h4v1h-4zM346,557h1v1h-1zM346,558h1v1h-1zM347,559h3v1h-3zM353,554h3v1h-3zM352,555h1v1h-1zM352,556h1v1h-1zM352,557h1v1h-1zM352,558h1v1h-1zM353,559h3v1h-3zM358,552h1v1h-1zM358,553h1v1h-1zM358,554h1v1h-1zM360,554h1v1h-1zM358,555h2v1h-2zM361,555h1v1h-1zM358,556h1v1h-1zM361,556h1v1h-1zM358,557h1v1h-1zM361,557h1v1h-1zM358,558h1v1h-1zM361,558h1v1h-1zM358,559h3v1h-3zM366,552h1v1h-1zM364,554h3v1h-3zM366,555h1v1h-1zM366,556h1v1h-1zM366,557h1v1h-1zM366,558h1v1h-1zM366,559h1v1h-1zM370,554h4v1h-4zM373,555h1v1h-1zM372,556h1v1h-1zM371,557h1v1h-1zM370,558h1v1h-1zM370,559h4v1h-4zM377,553h3v1h-3zM376,554h1v1h-1zM380,554h1v1h-1zM380,555h1v1h-1zM378,556h2v1h-2zM377,557h1v1h-1zM376,558h1v1h-1zM376,559h5v1h-5zM383,553h3v1h-3zM382,554h1v1h-1zM386,554h1v1h-1zM382,555h1v1h-1zM386,555h1v1h-1zM382,556h1v1h-1zM386,556h1v1h-1zM382,557h1v1h-1zM386,557h1v1h-1zM382,558h1v1h-1zM386,558h1v1h-1zM383,559h3v1h-3zM389,553h3v1h-3zM388,554h1v1h-1zM392,554h1v1h-1zM388,555h1v1h-1zM392,555h1v1h-1zM389,556h4v1h-4zM392,557h1v1h-1zM388,558h1v1h-1zM392,558h1v1h-1zM389,559h3v1h-3zM395,558h1v1h-1zM395,559h1v1h-1zM400,554h1v1h-1zM403,554h1v1h-1zM400,555h1v1h-1zM403,555h1v1h-1zM400,556h1v1h-1zM403,556h1v1h-1zM400,557h1v1h-1zM403,557h1v1h-1zM400,558h1v1h-1zM403,558h1v1h-1zM401,559h3v1h-3zM407,554h3v1h-3zM406,555h1v1h-1zM407,556h2v1h-2zM409,557h1v1h-1zM409,558h1v1h-1zM406,559h3v1h-3zM413,554h2v1h-2zM412,555h1v1h-1zM415,555h1v1h-1zM412,556h4v1h-4zM412,557h1v1h-1zM412,558h1v1h-1zM413,559h3v1h-3zM419,554h1v1h-1zM421,554h2v1h-2zM419,555h2v1h-2zM419,556h1v1h-1zM419,557h1v1h-1zM419,558h1v1h-1zM419,559h1v1h-1zM425,558h1v1h-1zM425,559h1v1h-1zM430,554h1v1h-1zM432,554h1v1h-1zM430,555h2v1h-2zM433,555h1v1h-1zM430,556h1v1h-1zM433,556h1v1h-1zM430,557h1v1h-1zM433,557h1v1h-1zM430,558h1v1h-1zM433,558h1v1h-1zM430,559h3v1h-3zM430,560h1v1h-1zM430,561h1v1h-1zM437,554h2v1h-2zM436,555h1v1h-1zM439,555h1v1h-1zM436,556h1v1h-1zM439,556h1v1h-1zM436,557h1v1h-1zM439,557h1v1h-1zM436,558h1v1h-1zM439,558h1v1h-1zM437,559h2v1h-2zM442,554h1v1h-1zM444,554h1v1h-1zM442,555h2v1h-2zM445,555h1v1h-1zM442,556h1v1h-1zM445,556h1v1h-1zM442,557h1v1h-1zM445,557h1v1h-1zM442,558h1v1h-1zM445,558h1v1h-1zM442,559h3v1h-3zM442,560h1v1h-1zM442,561h1v1h-1zM448,554h1v1h-1zM451,554h1v1h-1zM448,555h1v1h-1zM451,555h1v1h-1zM448,556h1v1h-1zM451,556h1v1h-1zM448,557h1v1h-1zM451,557h1v1h-1zM448,558h1v1h-1zM451,558h1v1h-1zM449,559h3v1h-3zM454,552h3v1h-3zM456,553h1v1h-1zM456,554h1v1h-1zM456,555h1v1h-1zM456,556h1v1h-1zM456,557h1v1h-1zM456,558h1v1h-1zM456,559h1v1h-1zM461,554h2v1h-2zM463,555h1v1h-1zM461,556h3v1h-3zM460,557h1v1h-1zM463,557h1v1h-1zM460,558h1v1h-1zM463,558h1v1h-1zM461,559h3v1h-3zM467,553h1v1h-1zM466,554h4v1h-4zM467,555h1v1h-1zM467,556h1v1h-1zM467,557h1v1h-1zM467,558h1v1h-1zM468,559h2v1h-2zM474,552h1v1h-1zM472,554h3v1h-3zM474,555h1v1h-1zM474,556h1v1h-1zM474,557h1v1h-1zM474,558h1v1h-1zM474,559h1v1h-1zM479,554h2v1h-2zM478,555h1v1h-1zM481,555h1v1h-1zM478,556h1v1h-1zM481,556h1v1h-1zM478,557h1v1h-1zM481,557h1v1h-1zM478,558h1v1h-1zM481,558h1v1h-1zM479,559h2v1h-2zM484,554h1v1h-1zM486,554h1v1h-1zM484,555h2v1h-2zM487,555h1v1h-1zM484,556h1v1h-1zM487,556h1v1h-1zM484,557h1v1h-1zM487,557h1v1h-1zM484,558h1v1h-1zM487,558h1v1h-1zM484,559h1v1h-1zM487,559h1v1h-1zM490,552h1v1h-1zM491,553h1v1h-1zM492,554h1v1h-1zM492,555h1v1h-1zM492,556h1v1h-1zM492,557h1v1h-1zM492,558h1v1h-1zM491,559h1v1h-1zM490,560h1v1h-1zM53,565h3v1h-3zM52,566h1v1h-1zM52,567h1v1h-1zM53,568h2v1h-2zM55,569h1v1h-1zM55,570h1v1h-1zM52,571h3v1h-3zM58,564h1v1h-1zM58,565h1v1h-1zM58,566h1v1h-1zM60,566h1v1h-1zM58,567h2v1h-2zM61,567h1v1h-1zM58,568h1v1h-1zM61,568h1v1h-1zM58,569h1v1h-1zM61,569h1v1h-1zM58,570h1v1h-1zM61,570h1v1h-1zM58,571h1v1h-1zM61,571h1v1h-1zM65,566h2v1h-2zM67,567h1v1h-1zM65,568h3v1h-3zM64,569h1v1h-1zM67,569h1v1h-1zM64,570h1v1h-1zM67,570h1v1h-1zM65,571h3v1h-3zM71,566h1v1h-1zM73,566h2v1h-2zM71,567h2v1h-2zM71,568h1v1h-1zM71,569h1v1h-1zM71,570h1v1h-1zM71,571h1v1h-1zM77,566h2v1h-2zM76,567h1v1h-1zM79,567h1v1h-1zM76,568h4v1h-4zM76,569h1v1h-1zM76,570h1v1h-1zM77,571h3v1h-3zM85,564h1v1h-1zM85,565h1v1h-1zM83,566h3v1h-3zM82,567h1v1h-1zM85,567h1v1h-1zM82,568h1v1h-1zM85,568h1v1h-1zM82,569h1v1h-1zM85,569h1v1h-1zM82,570h1v1h-1zM85,570h1v1h-1zM83,571h3v1h-3zM89,570h1v1h-1zM89,571h1v1h-1zM94,564h1v1h-1zM94,565h1v1h-1zM94,566h1v1h-1zM96,566h1v1h-1zM94,567h2v1h-2zM97,567h1v1h-1zM94,568h1v1h-1zM97,568h1v1h-1zM94,569h1v1h-1zM97,569h1v1h-1zM94,570h1v1h-1zM97,570h1v1h-1zM94,571h3v1h-3zM102,564h1v1h-1zM100,566h3v1h-3zM102,567h1v1h-1zM102,568h1v1h-1zM102,569h1v1h-1zM102,570h1v1h-1zM102,571h1v1h-1zM106,566h4v1h-4zM109,567h1v1h-1zM108,568h1v1h-1zM107,569h1v1h-1zM106,570h1v1h-1zM106,571h4v1h-4zM113,565h3v1h-3zM112,566h1v1h-1zM116,566h1v1h-1zM116,567h1v1h-1zM114,568h2v1h-2zM113,569h1v1h-1zM112,570h1v1h-1zM112,571h5v1h-5zM119,565h3v1h-3zM118,566h1v1h-1zM122,566h1v1h-1zM118,567h1v1h-1zM122,567h1v1h-1zM118,568h1v1h-1zM122,568h1v1h-1zM118,569h1v1h-1zM122,569h1v1h-1zM118,570h1v1h-1zM122,570h1v1h-1zM119,571h3v1h-3zM124,565h5v1h-5zM128,566h1v1h-1zM127,567h1v1h-1zM126,568h1v1h-1zM126,569h1v1h-1zM125,570h1v1h-1zM125,571h1v1h-1zM131,570h1v1h-1zM131,571h1v1h-1zM136,566h1v1h-1zM139,566h1v1h-1zM136,567h1v1h-1zM139,567h1v1h-1zM136,568h1v1h-1zM139,568h1v1h-1zM136,569h1v1h-1zM139,569h1v1h-1zM136,570h1v1h-1zM139,570h1v1h-1zM137,571h3v1h-3zM143,566h3v1h-3zM142,567h1v1h-1zM143,568h2v1h-2zM145,569h1v1h-1zM145,570h1v1h-1zM142,571h3v1h-3zM149,566h2v1h-2zM148,567h1v1h-1zM151,567h1v1h-1zM148,568h4v1h-4zM148,569h1v1h-1zM148,570h1v1h-1zM149,571h3v1h-3zM155,566h1v1h-1zM157,566h2v1h-2zM155,567h2v1h-2zM155,568h1v1h-1zM155,569h1v1h-1zM155,570h1v1h-1zM155,571h1v1h-1zM161,570h1v1h-1zM161,571h1v1h-1zM166,566h1v1h-1zM168,566h1v1h-1zM166,567h2v1h-2zM169,567h1v1h-1zM166,568h1v1h-1zM169,568h1v1h-1zM166,569h1v1h-1zM169,569h1v1h-1zM166,570h1v1h-1zM169,570h1v1h-1zM166,571h3v1h-3zM166,572h1v1h-1zM166,573h1v1h-1zM173,566h2v1h-2zM172,567h1v1h-1zM175,567h1v1h-1zM172,568h1v1h-1zM175,568h1v1h-1zM172,569h1v1h-1zM175,569h1v1h-1zM172,570h1v1h-1zM175,570h1v1h-1zM173,571h2v1h-2zM178,566h1v1h-1zM180,566h1v1h-1zM178,567h2v1h-2zM181,567h1v1h-1zM178,568h1v1h-1zM181,568h1v1h-1zM178,569h1v1h-1zM181,569h1v1h-1zM178,570h1v1h-1zM181,570h1v1h-1zM178,571h3v1h-3zM178,572h1v1h-1zM178,573h1v1h-1zM184,566h1v1h-1zM187,566h1v1h-1zM184,567h1v1h-1zM187,567h1v1h-1zM184,568h1v1h-1zM187,568h1v1h-1zM184,569h1v1h-1zM187,569h1v1h-1zM184,570h1v1h-1zM187,570h1v1h-1zM185,571h3v1h-3zM190,564h3v1h-3zM192,565h1v1h-1zM192,566h1v1h-1zM192,567h1v1h-1zM192,568h1v1h-1zM192,569h1v1h-1zM192,570h1v1h-1zM192,571h1v1h-1zM197,566h2v1h-2zM199,567h1v1h-1zM197,568h3v1h-3zM196,569h1v1h-1zM199,569h1v1h-1zM196,570h1v1h-1zM199,570h1v1h-1zM197,571h3v1h-3zM203,565h1v1h-1zM202,566h4v1h-4zM203,567h1v1h-1zM203,568h1v1h-1zM203,569h1v1h-1zM203,570h1v1h-1zM204,571h2v1h-2zM210,564h1v1h-1zM208,566h3v1h-3zM210,567h1v1h-1zM210,568h1v1h-1zM210,569h1v1h-1zM210,570h1v1h-1zM210,571h1v1h-1zM215,566h2v1h-2zM214,567h1v1h-1zM217,567h1v1h-1zM214,568h1v1h-1zM217,568h1v1h-1zM214,569h1v1h-1zM217,569h1v1h-1zM214,570h1v1h-1zM217,570h1v1h-1zM215,571h2v1h-2zM220,566h1v1h-1zM222,566h1v1h-1zM220,567h2v1h-2zM223,567h1v1h-1zM220,568h1v1h-1zM223,568h1v1h-1zM220,569h1v1h-1zM223,569h1v1h-1zM220,570h1v1h-1zM223,570h1v1h-1zM220,571h1v1h-1zM223,571h1v1h-1z" fill="#fff"/>
</svg>
</body></html>
